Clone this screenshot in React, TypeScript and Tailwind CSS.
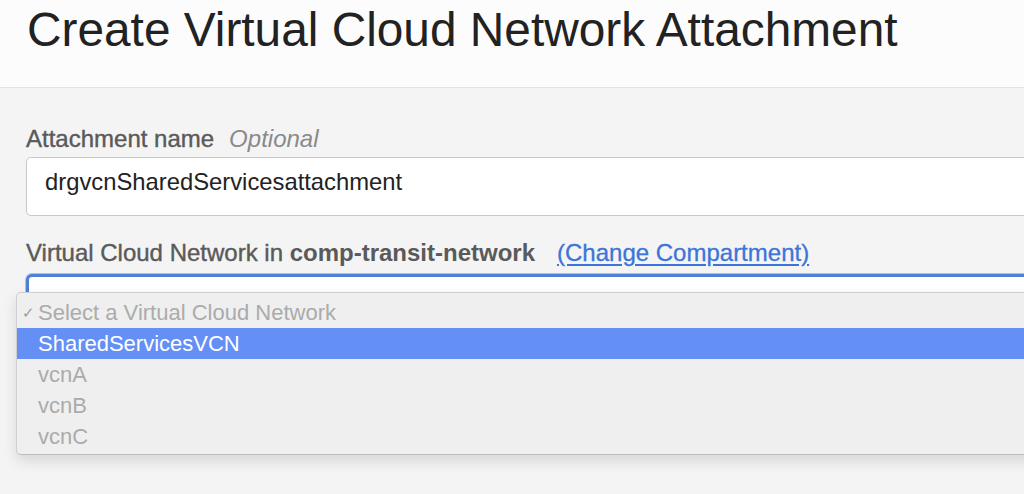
import { FC } from 'react';

const vcns = ['SharedServicesVCN', 'vcnA', 'vcnB', 'vcnC'];

const App: FC = () => {
  return (
    <div className="w-[1024px] h-[494px] overflow-hidden bg-[#f4f4f4] font-['Liberation_Sans',Arial,sans-serif]">
      <header className="h-[88px] bg-[#fcfcfc] border-b border-[#e2e2e2] pl-[27px] pt-[6px]">
        <h1 className="text-[47.8px] leading-none text-[#222222] whitespace-nowrap">
          Create Virtual Cloud Network Attachment
        </h1>
      </header>

      <div className="pl-[26px] pt-[39px]">
        <label className="flex items-baseline text-[24px] leading-[24px] whitespace-nowrap">
          <span className="text-[#5a5a5a] [-webkit-text-stroke:0.4px_#5a5a5a]">Attachment name</span>
          <span className="ml-[15px] italic text-[#8a8a8a]">Optional</span>
        </label>
        <div className="mt-[6px] w-[1100px] h-[59px] bg-white border border-[#c7c7cc] rounded-[5px] pl-[18px] pt-[12px]">
          <span className="text-[23.8px] leading-[24px] text-[#222222]">drgvcnSharedServicesattachment</span>
        </div>

        <div className="mt-[25px] flex items-baseline text-[24px] leading-[24px] whitespace-nowrap">
          <span className="text-[#5a5a5a] [-webkit-text-stroke:0.4px_#5a5a5a]">
            Virtual Cloud Network in <span className="font-bold [-webkit-text-stroke:0px]">comp-transit-network</span>
          </span>
          <a href="#" className="ml-[22px] text-[#3c74d9] underline underline-offset-[3px] [-webkit-text-stroke:0.3px_#3c74d9]">
            (Change Compartment)
          </a>
        </div>

        <div className="relative mt-[9px]">
          <div className="w-[1100px] h-[40px] bg-white border-[3px] border-[#4d80d6] rounded-[6px] shadow-[0_0_0_1px_#a9c2ec]" />
          <ul className="absolute left-[-10px] top-[18px] w-[1100px] pt-[4px] pb-[2px] bg-[#efeff0] border border-[#cfcfd1] border-b-[#bdbdbf] rounded-[5px] shadow-[0_6px_14px_rgba(0,0,0,0.12)] text-[22px] leading-[31px]">
            <li className="flex h-[31px] items-center text-[#ababab]">
              <span className="w-[21px] pl-[5px] text-[15px] leading-[31px] text-[#9a9a9a]">✓</span>
              <span className="leading-[31px]">Select a Virtual Cloud Network</span>
            </li>
            {vcns.map((name, i) => (
              <li
                key={name}
                className={
                  i === 0
                    ? 'h-[31px] pl-[21px] bg-[#648ff5] text-white'
                    : 'h-[31px] pl-[21px] text-[#ababab]'
                }
              >
                {name}
              </li>
            ))}
          </ul>
        </div>
      </div>
    </div>
  );
};

export default App;
